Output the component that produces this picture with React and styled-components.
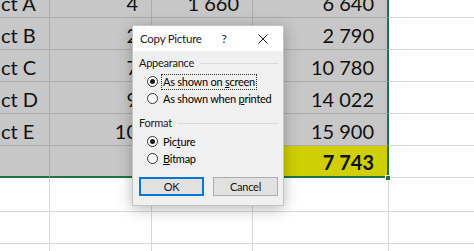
import React from "react";
import styled, { createGlobalStyle } from "styled-components";

const Global = createGlobalStyle`
  html, body { margin: 0; padding: 0; background: #fff; }
  body { width: 474px; height: 251px; overflow: hidden; }
`;

const Page = styled.div`
  position: relative;
  width: 474px;
  height: 251px;
  overflow: hidden;
  background: #fff;
`;

const Sheet = styled.div`
  display: grid;
  grid-template-columns: 50px 102px 101px 136px 86px;
  margin-top: -14px;
  font-family: Lato, "Liberation Sans", sans-serif;
  font-size: 20px;
  color: #111;
`;

const Cell = styled.div`
  height: ${(p) => p.$h || 32}px;
  box-sizing: border-box;
  border-right: 1px solid ${(p) => (p.$sel ? "#acacac" : "#d9d9d9")};
  border-bottom: 1px solid ${(p) => (p.$sel ? "#acacac" : "#d9d9d9")};
  background: ${(p) => (p.$hl ? "#d0cf06" : p.$sel ? "#c7c7c7" : "#fff")};
  display: flex;
  align-items: flex-end;
  justify-content: ${(p) => (p.$num ? "flex-end" : "flex-start")};
  padding: 0 ${(p) => (p.$num ? "13px" : "0")} 2px ${(p) => (p.$num ? "0" : "1px")};
  line-height: 24px;
  font-weight: ${(p) => (p.$bold ? 700 : 400)};
  white-space: nowrap;
  overflow: hidden;
  ${(p) => p.$edgeR && "border-right: 2px solid #217346;"}
  ${(p) => p.$edgeB && "border-bottom: 2px solid #217346;"}
`;

const FillHandle = styled.div`
  position: absolute;
  left: 385px;
  top: 175px;
  width: 6px;
  height: 6px;
  background: #217346;
  border: 1px solid #fff;
  box-sizing: border-box;
`;

const Dialog = styled.div`
  position: absolute;
  left: 132px;
  top: 25px;
  width: 152px;
  box-sizing: border-box;
  background: #f0f0f0;
  border: 1px solid #c4c4c4;
  box-shadow: 0 3px 14px rgba(0, 0, 0, 0.28);
  font-family: Lato, "Noto Sans", sans-serif;
  font-size: 11px;
  letter-spacing: -0.25px;
  color: #000;
`;

const TitleBar = styled.div`
  display: flex;
  align-items: center;
  height: 25px;
  background: #fff;
  padding-left: 7px;
`;

const Title = styled.div`
  flex: 1;
  font-size: 11.5px;
  color: #1a1a1a;
`;

const TitleButton = styled.div`
  width: ${(p) => p.$w}px;
  text-align: center;
  font-size: 12px;
  color: #222;
  display: flex;
  align-items: center;
  justify-content: center;
  margin-right: ${(p) => p.$mr || 0}px;
`;

const Body = styled.div`
  padding: 5px 5px 9px 6px;
`;

const GroupLabel = styled.div`
  display: flex;
  align-items: center;
  gap: 6px;
  height: 14px;
  line-height: 14px;
  color: #1a1a1a;
  margin-top: ${(p) => p.$mt || 0}px;
  &::after {
    content: "";
    flex: 1;
    height: 1px;
    background: #dadada;
  }
`;

const RadioList = styled.div`
  display: flex;
  flex-direction: column;
  margin-top: 3px;
  padding-left: 8px;
`;

const RadioRow = styled.div`
  display: flex;
  align-items: center;
  height: 17px;
  gap: 3px;
`;

const Circle = styled.span`
  width: 11px;
  height: 11px;
  box-sizing: border-box;
  border-radius: 50%;
  border: 1px solid #333;
  background: #fff;
  display: flex;
  align-items: center;
  justify-content: center;
  flex-shrink: 0;
  &::after {
    content: "";
    width: 5px;
    height: 5px;
    border-radius: 50%;
    background: ${(p) => (p.$on ? "#1a1a1a" : "transparent")};
  }
`;

const RadioText = styled.span`
  white-space: nowrap;
  line-height: 14px;
  padding: 0 1px;
  border: 1px ${(p) => (p.$focus ? "dotted #333" : "solid transparent")};
  u { text-decoration: underline; text-underline-offset: 1px; }
`;

const Buttons = styled.div`
  display: flex;
  gap: 9px;
  margin-top: 10px;
`;

const Button = styled.div`
  width: 65px;
  height: 19px;
  box-sizing: border-box;
  display: flex;
  align-items: center;
  justify-content: center;
  background: #e1e1e1;
  border: ${(p) => (p.$primary ? "2px solid #0078d7" : "1px solid #adadad")};
  color: #111;
`;

const names = ["ct A", "ct B", "ct C", "ct D", "ct E"];
const qty = ["4", "2", "7", "9", "10"];
const price = ["1 660", "1 395", "1 540", "1 558", "1 590"];
const total = ["6 640", "2 790", "10 780", "14 022", "15 900"];

export default function App() {
  return (
    <Page>
      <Global />
      <Sheet>
        {names.map((n, i) => (
          <React.Fragment key={n}>
            <Cell $sel>{n}</Cell>
            <Cell $sel $num>{qty[i]}</Cell>
            <Cell $sel $num>{price[i]}</Cell>
            <Cell $sel $num $edgeR>{total[i]}</Cell>
            <Cell />
          </React.Fragment>
        ))}
        <Cell $sel $edgeB />
        <Cell $sel $edgeB />
        <Cell $sel $edgeB />
        <Cell $hl $num $bold $edgeR $edgeB>7 743</Cell>
        <Cell />
        {[0, 1, 2].map((r) => (
          <React.Fragment key={r}>
            <Cell $h={r === 0 ? 34 : 32} />
            <Cell $h={r === 0 ? 34 : 32} />
            <Cell $h={r === 0 ? 34 : 32} />
            <Cell $h={r === 0 ? 34 : 32} />
            <Cell $h={r === 0 ? 34 : 32} />
          </React.Fragment>
        ))}
      </Sheet>
      <FillHandle />
      <Dialog>
        <TitleBar>
          <Title>Copy Picture</Title>
          <TitleButton $w={30} $mr={4}>?</TitleButton>
          <TitleButton $w={40}>
            <svg width="10" height="10" viewBox="0 0 10 10">
              <path d="M0.5 0.5 L9.5 9.5 M9.5 0.5 L0.5 9.5" stroke="#222" strokeWidth="1" />
            </svg>
          </TitleButton>
        </TitleBar>
        <Body>
          <GroupLabel>Appearance</GroupLabel>
          <RadioList>
            <RadioRow>
              <Circle $on />
              <RadioText $focus>As shown on <u>s</u>creen</RadioText>
            </RadioRow>
            <RadioRow>
              <Circle />
              <RadioText>As shown when <u>p</u>rinted</RadioText>
            </RadioRow>
          </RadioList>
          <GroupLabel $mt={9}>Format</GroupLabel>
          <RadioList>
            <RadioRow>
              <Circle $on />
              <RadioText>Pic<u>t</u>ure</RadioText>
            </RadioRow>
            <RadioRow>
              <Circle />
              <RadioText><u>B</u>itmap</RadioText>
            </RadioRow>
          </RadioList>
          <Buttons>
            <Button $primary>OK</Button>
            <Button>Cancel</Button>
          </Buttons>
        </Body>
      </Dialog>
    </Page>
  );
}
